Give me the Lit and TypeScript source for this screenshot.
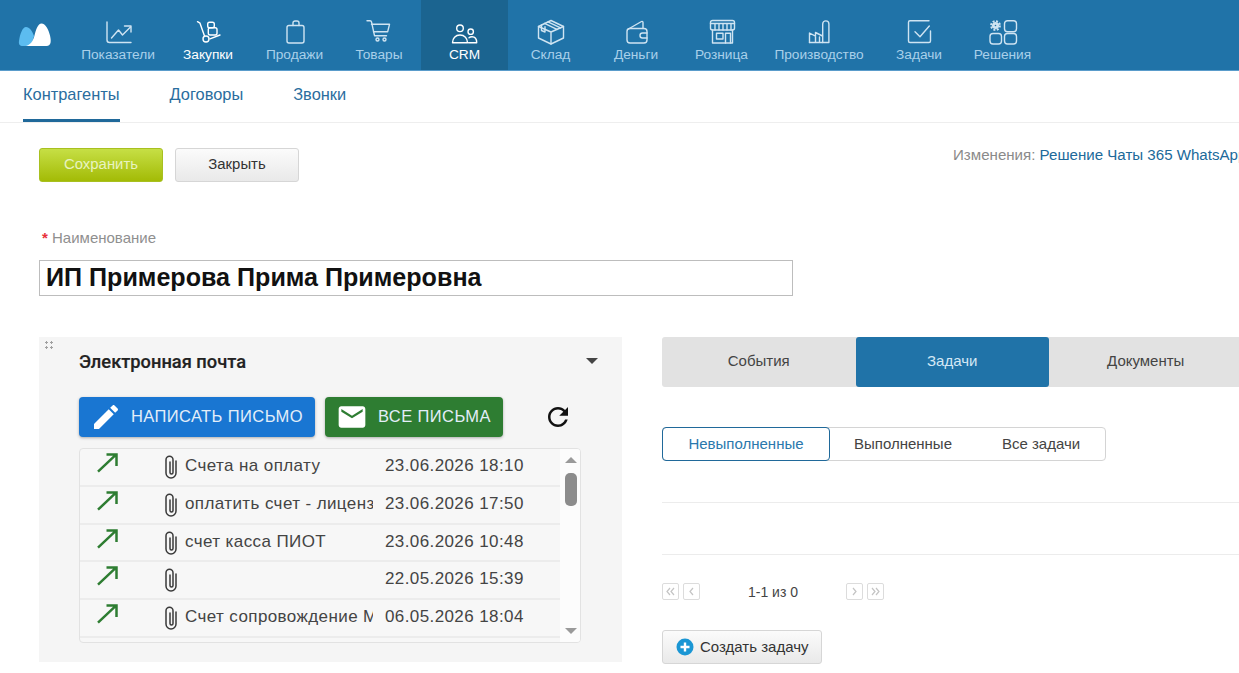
import { LitElement, html, css, svg } from 'lit';
import { customElement } from 'lit/decorators.js';

const icons: Record<string, unknown> = {
  chart: svg`<path d="M5 2v18a2.5 2.5 0 0 0 2.5 2.5H29"/><path d="M9.500 18l7-8 4 5 8-8"/><path d="M22.500 6H29V12"/>`,
  trolley: svg`<path d="M5.500 1.700l2.500 1.500L12.500 16"/><circle cx="14" cy="19" r="3"/><path d="M18 18.800l10-3.800"/><rect x="15.700" y="2.300" width="6.600" height="5.400" rx="1.800"/><rect x="16.300" y="7.700" width="8.700" height="7.300" rx="1.800"/>`,
  bag: svg`<rect x="8" y="5.500" width="17" height="17.500" rx="2"/><path d="M14 5.500V3a2 2 0 0 1 2-2h2a2 2 0 0 1 2 2v2.500"/>`,
  cart: svg`<path d="M4 .7H7a1.500 1.500 0 0 1 1.500 1.200L11.500 15.700h12"/><path d="M8.500 4.300H26.500l-1.800 7.400H10.500"/><circle cx="14.500" cy="19.500" r="1.500"/><circle cx="21.500" cy="19.500" r="1.500"/>`,
  crm: svg`<circle cx="11" cy="8.300" r="3.300"/><path d="M3.500 22.700c0-4.500 3-7.700 7.500-7.700s7.500 3.200 7.500 7.700z"/><circle cx="21.700" cy="11.700" r="2.700"/><path d="M19.500 22.700h8.200c0-3.500-1.700-6-4.700-6-1.200 0-2.200.3-3 1"/>`,
  box: svg`<path d="M16 .5l12.500 6V18L16 24 3.500 18V6.500z"/><path d="M3.500 6.500L16 12l12.500-5.500M16 12v12"/><path d="M9.500 3.400l12.500 6M13 1.900l12.500 6M6.500 5v5.500l3.500 1.500V6.800"/>`,
  wallet: svg`<rect x="7" y="8.500" width="20" height="14.500" rx="3"/><path d="M7.500 9.500L21.500 1.500a1 1 0 0 1 1.500 1v6"/><path d="M27 13h-4.500a2.500 2.500 0 0 0 0 5H27"/>`,
  shop: svg`<rect x="4.500" y=".5" width="24" height="9.500" rx="2"/><path d="M4.500 3.500h24M9 3.500V10M13 3.500V10M17 3.500V10M21 3.500V10M25 3.500V10"/><path d="M6.500 10v13h20V10"/><rect x="10.500" y="13.300" width="6.500" height="5.700"/><path d="M19.500 23v-9.700h5V23"/>`,
  factory: svg`<path d="M6.500 22.500V13l6 3.200V12.500l7 3.500"/><path d="M19.700 22.500V4a3.100 3.100 0 0 1 6.200 0v18.500z"/><path d="M6.500 22.500h13.200M12.500 22.500V17M16.500 22.500V17"/>`,
  check: svg`<path d="M26 .8H7A1.500 1.500 0 0 0 5.500 2.300V21A1.500 1.500 0 0 0 7 22.500H26A1.500 1.500 0 0 0 27.500 21V11"/><path d="M12 11.700l5 5 9.300-10.700"/>`,
  apps: svg`<circle cx="8.500" cy="5.500" r="2.200" stroke-width="2.800"/><circle cx="8.500" cy="5.500" r="4.400" stroke-width="2" stroke-dasharray="2 1.450" stroke-linecap="butt"/><rect x="17.500" y=".7" width="12" height="11" rx="3"/><rect x="3" y="13.500" width="11.500" height="10.500" rx="3"/><rect x="17.500" y="13.500" width="12" height="10.500" rx="3"/>`,
};

const navItems = [
  { label: 'Показатели', icon: 'chart', w: 92 },
  { label: 'Закупки', icon: 'trolley', w: 88, bright: true },
  { label: 'Продажи', icon: 'bag', w: 85 },
  { label: 'Товары', icon: 'cart', w: 84 },
  { label: 'CRM', icon: 'crm', w: 87, active: true },
  { label: 'Склад', icon: 'box', w: 85 },
  { label: 'Деньги', icon: 'wallet', w: 86 },
  { label: 'Розница', icon: 'shop', w: 85 },
  { label: 'Производство', icon: 'factory', w: 110 },
  { label: 'Задачи', icon: 'check', w: 90 },
  { label: 'Решения', icon: 'apps', w: 77 },
];

const mails = [
  { subject: 'Счета на оплату', date: '23.06.2026 18:10', clip: true },
  { subject: 'оплатить счет - лицензия', date: '23.06.2026 17:50', clip: true },
  { subject: 'счет касса ПИОТ', date: '23.06.2026 10:48', clip: true },
  { subject: '', date: '22.05.2026 15:39', clip: true },
  { subject: 'Счет сопровождение МойСклад', date: '06.05.2026 18:04', clip: true },
  { subject: '', date: '', clip: false },
];

@customElement('app-root')
export class AppRoot extends LitElement {
  static override styles = css`
    :host {
      display: block;
      width: 1239px;
      height: 673px;
      overflow: hidden;
      background: #fff;
      font-family: 'Liberation Sans', Arial, sans-serif;
      color: #333;
    }

    .topbar {
      display: flex;
      height: 71px;
      box-sizing: border-box;
      background: #2073a8;
      border-bottom: 1px solid #5a9ccb;
    }
    .logo {
      width: 72px;
      flex: none;
      display: flex;
      align-items: center;
      justify-content: center;
      padding-right: 2px;
      box-sizing: border-box;
    }
    .nav-item {
      flex: none;
      box-sizing: border-box;
      padding-top: 20px;
      display: flex;
      flex-direction: column;
      align-items: center;
      color: #a9d0ea;
      font-size: 13.700px;
      line-height: 18px;
      white-space: nowrap;
    }
    .nav-item svg {
      width: 32px;
      height: 26px;
      overflow: visible;
      fill: none;
      stroke: #cfe4f2;
      stroke-width: 1.400;
      stroke-linecap: round;
      stroke-linejoin: round;
    }
    .nav-item.bright {
      color: #fff;
    }
    .nav-item.bright svg,
    .nav-item.active svg {
      stroke: #fff;
    }
    .nav-item.active {
      background: #1b6490;
      color: #fff;
    }

    .subnav {
      display: flex;
      gap: 50px;
      height: 52px;
      box-sizing: border-box;
      padding-left: 23px;
      border-bottom: 1px solid #eee;
    }
    .subnav a {
      display: block;
      height: 51px;
      box-sizing: border-box;
      padding-top: 14px;
      font-size: 16.400px;
      line-height: 18px;
      color: #2a6d9e;
    }
    .subnav a.on {
      border-bottom: 3px solid #20699a;
    }

    .content {
      padding-left: 39px;
    }
    .toolbar {
      display: flex;
      gap: 12px;
      padding-top: 25px;
      white-space: nowrap;
    }
    .btn {
      box-sizing: border-box;
      width: 124px;
      height: 34px;
      flex: none;
      border-radius: 3px;
      font-size: 14.900px;
      display: flex;
      align-items: center;
      justify-content: center;
      padding-bottom: 3px;
    }
    .btn.save {
      color: #e8f3c0;
      background: linear-gradient(#c6df45, #a3bb06);
      border: 1px solid #a8c020;
    }
    .btn.close {
      color: #333;
      background: linear-gradient(#fbfbfb, #e9e9e9);
      border: 1px solid #d6d6d6;
    }
    .changes {
      margin: -1px 0 0 642px;
      font-size: 15.100px;
      line-height: 15px;
      color: #8a8a8a;
    }
    .changes a {
      color: #20699a;
    }

    .field-label {
      margin-top: 48px;
      padding-left: 3px;
      font-size: 15px;
      line-height: 16px;
      color: #8f8f8f;
    }
    .field-label b {
      color: #e8303a;
      font-weight: 700;
    }
    .name-input {
      margin-top: 14px;
      box-sizing: border-box;
      width: 754px;
      height: 36px;
      padding-left: 6px;
      border: 1px solid #bdbdbd;
      font-size: 25.100px;
      font-weight: 700;
      line-height: 33px;
      color: #111;
      white-space: nowrap;
    }

    .columns {
      display: flex;
      gap: 40px;
      margin-top: 41px;
    }

    .mail-panel {
      position: relative;
      flex: none;
      width: 583px;
      height: 325px;
      box-sizing: border-box;
      padding: 14px 24px 0 40px;
      background: #f5f5f5;
    }
    .grip {
      position: absolute;
      left: 5px;
      top: 3px;
      width: 10px;
      height: 10px;
      background: radial-gradient(circle, #a0a0a0 1.100px, transparent 1.400px) 0 0 / 5px 5px;
    }
    .mail-head {
      display: flex;
      justify-content: space-between;
      align-items: center;
      height: 20px;
      font-family: Roboto, sans-serif;
      font-size: 18.300px;
      font-weight: 500;
      color: #222;
      -webkit-text-stroke: 0.200px #222;
    }
    .caret {
      width: 0;
      height: 0;
      border: 6px solid transparent;
      border-top: 6px solid #444;
      border-bottom: 0;
    }
    .mail-actions {
      display: flex;
      align-items: center;
      margin-top: 26px;
    }
    .mbtn {
      box-sizing: border-box;
      height: 40px;
      display: flex;
      align-items: center;
      border-radius: 4px;
      font-size: 16.500px;
      letter-spacing: 0.400px;
      color: #e3eef9;
      box-shadow: 0 1px 3px rgba(0, 0, 0, 0.300);
    }
    .mbtn span {
      padding-bottom: 2px;
    }
    .mbtn svg {
      width: 32px;
      height: 32px;
      fill: #fff;
      flex: none;
    }
    .mbtn.write {
      width: 236px;
      padding-left: 11px;
      gap: 9px;
      background: #1976d2;
    }
    .mbtn.all {
      width: 178px;
      margin-left: 10px;
      padding-left: 11px;
      gap: 10px;
      background: #2e7d32;
    }
    .reload {
      width: 30px;
      height: 30px;
      margin-left: 40px;
      fill: #111;
    }

    .mail-table {
      position: relative;
      margin-top: 11px;
      width: 502px;
      height: 195px;
      box-sizing: border-box;
      overflow: hidden;
      border: 1px solid #e2e2e2;
      border-radius: 4px;
      background: #f7f7f7;
    }
    .mail-row {
      display: grid;
      grid-template-columns: 85px 20px 188px 1fr;
      height: 37.750px;
      box-sizing: border-box;
      border-bottom: 2px solid #ececec;
      font-size: 17px;
      letter-spacing: 0.400px;
      line-height: 33px;
      color: #444;
      white-space: nowrap;
    }
    .mail-row .arrow {
      width: 24px;
      height: 24px;
      margin: 2px 0 0 15px;
      fill: none;
      stroke: #2e7d32;
      stroke-width: 2.500;
    }
    .mail-row .clip {
      width: 12px;
      height: 24px;
      margin-top: 6px;
      fill: none;
      stroke: #3a3a3a;
      stroke-width: 1.500;
      stroke-linecap: round;
    }
    .mail-row .subject {
      overflow: hidden;
    }
    .mail-row .date {
      padding-left: 12px;
    }
    .scroll {
      position: absolute;
      top: 0;
      right: 0;
      bottom: 0;
      width: 20px;
      background: #fcfcfc;
    }
    .scroll .up,
    .scroll .down {
      position: absolute;
      left: 5px;
      width: 0;
      height: 0;
      border: 6px solid transparent;
    }
    .scroll .up {
      top: 8px;
      border-bottom: 6px solid #9a9a9a;
      border-top: 0;
    }
    .scroll .down {
      bottom: 8px;
      border-top: 6px solid #9a9a9a;
      border-bottom: 0;
    }
    .scroll .thumb {
      position: absolute;
      top: 24px;
      left: 5px;
      width: 12px;
      height: 33px;
      border-radius: 5px;
      background: #8c8c8c;
    }

    .tasks {
      flex: none;
      width: 580px;
    }
    .tabs {
      display: grid;
      grid-template-columns: repeat(3, 193.500px);
      height: 50px;
      border-radius: 3px;
      background: #e2e2e2;
      font-size: 15px;
      line-height: 47px;
      text-align: center;
      color: #444;
    }
    .tabs .on {
      background: #2073a8;
      color: #d4e8f5;
      border-radius: 3px;
    }
    .filter {
      display: flex;
      margin-top: 40px;
      width: 444px;
      height: 34px;
      box-sizing: border-box;
      border: 1px solid #d4d4d4;
      border-radius: 4px;
      font-size: 15px;
      line-height: 31px;
      text-align: center;
      color: #444;
    }
    .filter span {
      flex: none;
    }
    .filter .on {
      width: 168px;
      height: 34px;
      margin: -1px 0 0 -1px;
      box-sizing: border-box;
      border: 1px solid #20699a;
      border-radius: 4px;
      color: #2a78ad;
    }
    .rule {
      height: 1px;
      background: #ececec;
    }
    .rule.first {
      margin-top: 41px;
    }
    .rule.second {
      margin-top: 51px;
    }
    .pager {
      display: flex;
      align-items: center;
      margin-top: 28px;
      height: 17px;
      font-size: 14px;
      color: #444;
    }
    .pg {
      box-sizing: border-box;
      width: 17px;
      height: 17px;
      margin-right: 4px;
      flex: none;
      border: 1px solid #dcdcdc;
      border-radius: 2px;
    }
    .pg svg {
      display: block;
      width: 15px;
      height: 15px;
      fill: none;
      stroke: #c4c4c4;
      stroke-width: 1.200;
    }
    .pager .count {
      width: 142px;
      margin: 0 2px 0 -2px;
      flex: none;
      text-align: center;
    }
    .create {
      display: flex;
      align-items: center;
      gap: 6px;
      box-sizing: border-box;
      width: 160px;
      height: 34px;
      margin-top: 30px;
      padding-left: 13px;
      border: 1px solid #d6d6d6;
      border-radius: 3px;
      background: linear-gradient(#fbfbfb, #e9e9e9);
      font-size: 15px;
      color: #333;
    }
    .create span {
      padding-bottom: 2px;
    }
    .create svg {
      width: 18px;
      height: 18px;
      flex: none;
    }
  `;

  private pagerIcon(d: string) {
    return html`<span class="pg"><svg viewBox="0 0 15 15"><path d=${d}></path></svg></span>`;
  }

  override render() {
    return html`
      <div class="topbar">
        <div class="logo">
          <svg width="34" height="26" viewBox="0 0 34 26">
            <path fill="#5cbcf0" d="M8 5c3.500 0 6 3.500 8 9l-3 10H5c-3.500 0-4.500-2-4-5C2 12 4.500 5 8 5z"></path>
            <path fill="#fff" d="M23.500 1.500c4 0 7 6 8.500 12 1.200 5 1.500 10.500-3.500 10.500H8c4-1 7-4.500 8.500-10.500 1.500-6 3.500-12 7-12z"></path>
          </svg>
        </div>
        ${navItems.map(
          (n) => html`
            <div
              class="nav-item ${n.active ? 'active' : ''} ${n.bright ? 'bright' : ''}"
              style="width:${n.w}px"
            >
              <svg viewBox="0 0 32 26">${icons[n.icon]}</svg>
              <span>${n.label}</span>
            </div>
          `
        )}
      </div>

      <div class="subnav">
        <a class="on">Контрагенты</a>
        <a>Договоры</a>
        <a>Звонки</a>
      </div>

      <div class="content">
        <div class="toolbar">
          <div class="btn save">Сохранить</div>
          <div class="btn close">Закрыть</div>
          <div class="changes">Изменения: <a>Решение Чаты 365 WhatsApp</a></div>
        </div>

        <div class="field-label"><b>*</b> Наименование</div>
        <div class="name-input">ИП Примерова Прима Примеровна</div>

        <div class="columns">
          <div class="mail-panel">
            <div class="grip"></div>
            <div class="mail-head">
              <span>Электронная почта</span>
              <span class="caret"></span>
            </div>
            <div class="mail-actions">
              <div class="mbtn write">
                <svg viewBox="0 0 24 24">
                  <path d="M3 17.250V21h3.750L17.810 9.940l-3.750-3.750L3 17.250zM20.710 7.040c.39-.39.39-1.020 0-1.410l-2.340-2.340c-.39-.39-1.020-.39-1.410 0l-1.830 1.830 3.750 3.750 1.830-1.830z"></path>
                </svg>
                <span>НАПИСАТЬ ПИСЬМО</span>
              </div>
              <div class="mbtn all">
                <svg viewBox="0 0 24 24">
                  <path d="M20 4H4c-1.100 0-2 .9-2 2v12c0 1.100.9 2 2 2h16c1.100 0 2-.9 2-2V6c0-1.100-.9-2-2-2zm0 4l-8 5-8-5V6l8 5 8-5v2z"></path>
                </svg>
                <span>ВСЕ ПИСЬМА</span>
              </div>
              <svg class="reload" viewBox="0 0 24 24">
                <path d="M17.650 6.350C16.200 4.900 14.210 4 12 4c-4.420 0-7.990 3.580-7.990 8s3.570 8 7.990 8c3.730 0 6.840-2.550 7.730-6h-2.080c-.82 2.330-3.040 4-5.650 4-3.310 0-6-2.690-6-6s2.690-6 6-6c1.660 0 3.140.69 4.220 1.780L13 11h7V4l-2.350 2.350z"></path>
              </svg>
            </div>

            <div class="mail-table">
              ${mails.map(
                (m) => html`
                  <div class="mail-row">
                    ${m.clip
                      ? html`<svg class="arrow" viewBox="0 0 24 24"><path d="M3 20.700L21 3.700M11.500 3.500H21.500V15"></path></svg>`
                      : html`<span></span>`}
                    ${m.clip
                      ? html`<svg class="clip" viewBox="0 0 12 24"><path d="M11 6v12a5 5 0 0 1-10 0V4.800a3.500 3.500 0 0 1 7 0V17.500a1.500 1.500 0 0 1-3 0V7"></path></svg>`
                      : html`<span></span>`}
                    <span class="subject">${m.subject}</span>
                    <span class="date">${m.date}</span>
                  </div>
                `
              )}
              <div class="scroll">
                <span class="up"></span>
                <span class="thumb"></span>
                <span class="down"></span>
              </div>
            </div>
          </div>

          <div class="tasks">
            <div class="tabs">
              <span>События</span>
              <span class="on">Задачи</span>
              <span>Документы</span>
            </div>
            <div class="filter">
              <span class="on">Невыполненные</span>
              <span style="width:146px">Выполненные</span>
              <span style="width:130px">Все задачи</span>
            </div>
            <div class="rule first"></div>
            <div class="rule second"></div>
            <div class="pager">
              ${this.pagerIcon('M7 4L4 7.500 7 11M11 4L8 7.500 11 11')}
              ${this.pagerIcon('M9 4L6 7.500 9 11')}
              <span class="count">1-1 из 0</span>
              ${this.pagerIcon('M6 4l3 3.500L6 11')}
              ${this.pagerIcon('M4 4l3 3.500L4 11M8 4l3 3.500L8 11')}
            </div>
            <div class="create">
              <svg viewBox="0 0 18 18">
                <circle cx="9" cy="9" r="8.500" fill="#1a96d4"></circle>
                <path d="M9 4.500v9M4.500 9h9" stroke="#fff" stroke-width="2.400"></path>
              </svg>
              <span>Создать задачу</span>
            </div>
          </div>
        </div>
      </div>
    `;
  }
}

declare global {
  interface HTMLElementTagNameMap {
    'app-root': AppRoot;
  }
}
